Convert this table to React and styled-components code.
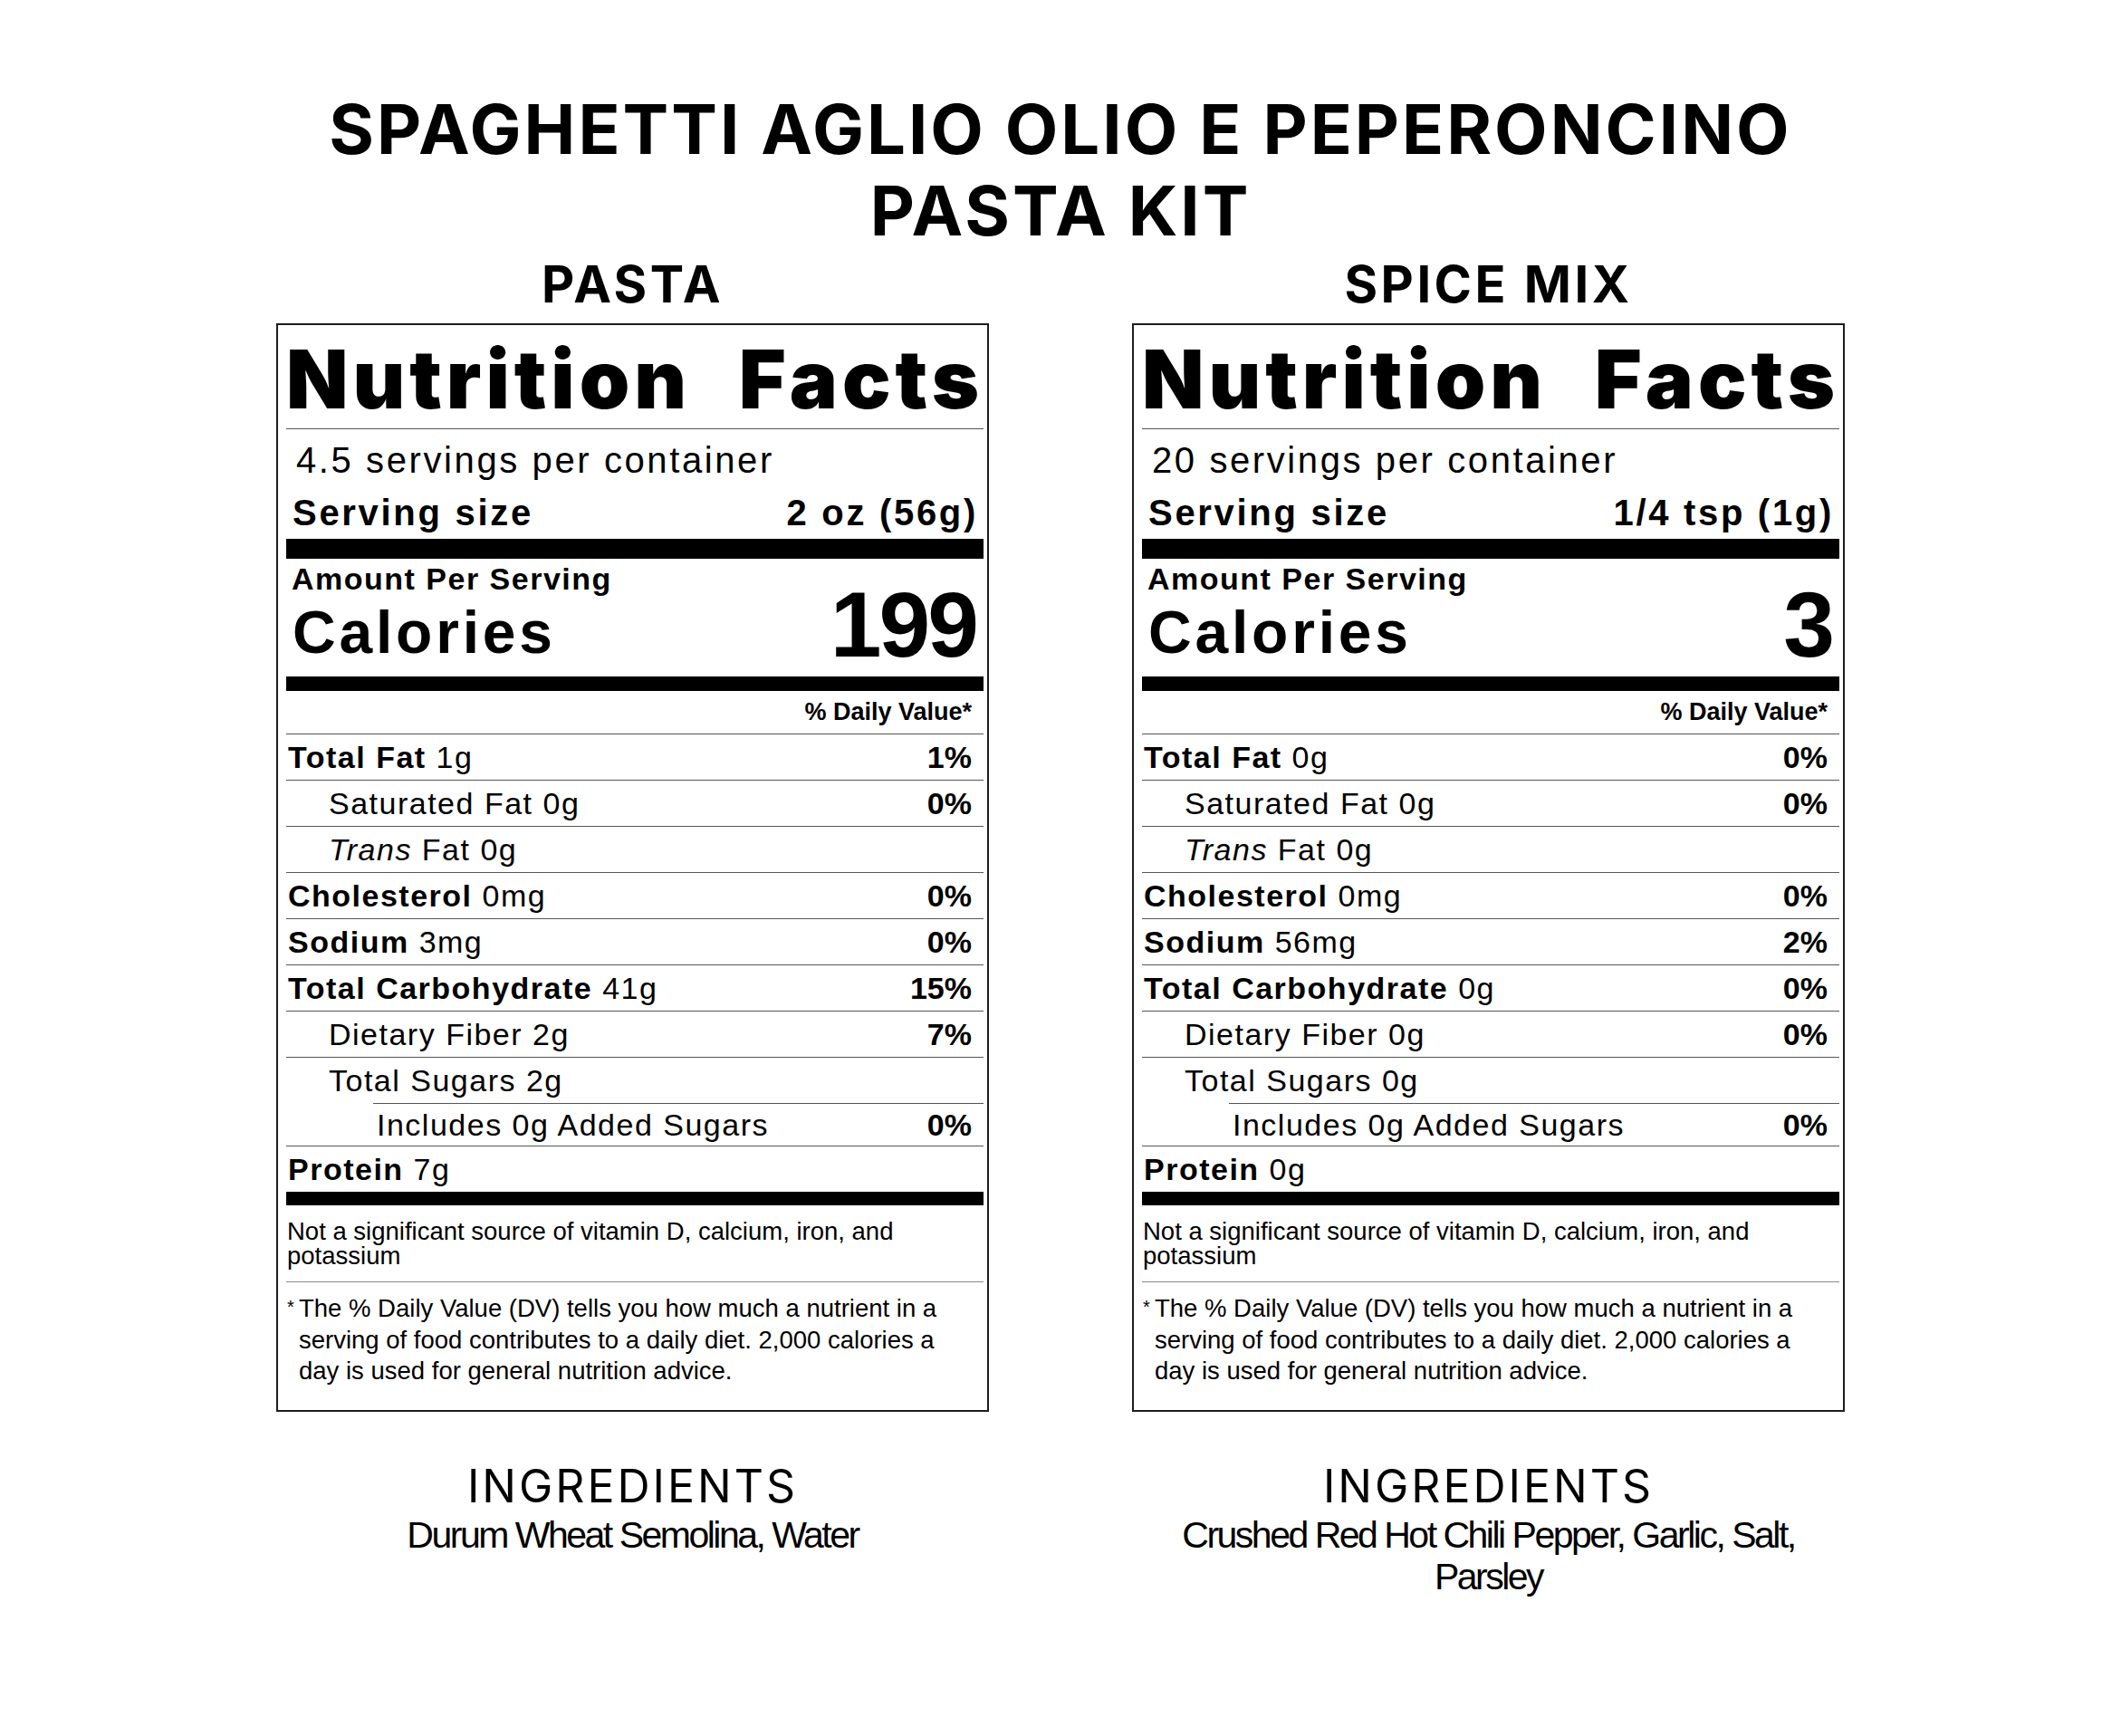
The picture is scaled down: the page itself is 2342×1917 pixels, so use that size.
import React from 'react';
import styled, { createGlobalStyle } from 'styled-components';

const GlobalStyle = createGlobalStyle`
  html, body {
    margin: 0;
    padding: 0;
    background: #ffffff;
  }
  * {
    box-sizing: border-box;
  }
`;

const labelFont = `"Liberation Sans", Arial, Helvetica, sans-serif`;
const displayFont = `Inter, "Open Sans", sans-serif`;

const Page = styled.div`
  width: 2342px;
  min-height: 1917px;
  padding-top: 97px;
  display: flex;
  flex-direction: column;
  align-items: center;
  background: #fff;
  color: #000;
`;

const Title = styled.h1`
  margin: 0;
  font-family: ${displayFont};
  font-weight: 700;
  font-size: 76px;
  line-height: 90px;
  text-align: center;
  letter-spacing: 3px;
`;

const Columns = styled.div`
  display: grid;
  grid-template-columns: 787px 787px;
  column-gap: 158px;
  margin-top: 9px;
`;

const Column = styled.section`
  display: flex;
  flex-direction: column;
  align-items: center;
`;

const SectionTitle = styled.h2`
  margin: 0 0 15px;
  font-family: ${displayFont};
  font-weight: 700;
  font-size: 56px;
  line-height: 56px;
  letter-spacing: 3.5px;
`;

const LabelBox = styled.div`
  width: 787px;
  border: 2px solid #1d1d1d;
  padding: 0 4px 0 9px;
  font-family: ${labelFont};
  color: #000;
`;

const Heading = styled.div`
  display: flex;
  justify-content: space-between;
  height: 115px;
  padding: 4px 0 0 0;
  line-height: 111px;
  font-family: ${displayFont};
  font-weight: 900;
  font-size: 89px;
  letter-spacing: 5px;
  border-bottom: 1px solid #555;
  white-space: nowrap;
`;

const Servings = styled.div`
  height: 68px;
  line-height: 68px;
  padding-left: 11px;
  font-size: 40px;
  letter-spacing: 2.6px;
`;

const ServingSize = styled.div`
  display: flex;
  justify-content: space-between;
  height: 53px;
  line-height: 49px;
  padding: 0 6px 4px 7px;
  font-size: 40px;
  font-weight: 700;
  letter-spacing: 2.7px;
`;

const Bar = styled.div`
  height: ${(p) => p.$h}px;
  background: #000;
`;

const CaloriesBlock = styled.div`
  display: flex;
  justify-content: space-between;
  align-items: flex-start;
  height: 130px;
  padding: 0 8px 0 6px;
`;

const CaloriesLeft = styled.div`
  display: flex;
  flex-direction: column;
  padding-top: 5px;
`;

const AmountLine = styled.div`
  font-size: 34px;
  line-height: 34px;
  font-weight: 700;
  letter-spacing: 1.5px;
`;

const CaloriesWord = styled.div`
  font-size: 66px;
  line-height: 84px;
  font-weight: 700;
  letter-spacing: 3.8px;
  margin-left: 1px;
`;

const CaloriesValue = styled.div`
  margin-top: 22px;
  font-size: 102px;
  line-height: 102px;
  font-weight: 700;
  letter-spacing: -3px;
`;

const DailyHead = styled.div`
  height: 48px;
  line-height: 47px;
  text-align: right;
  padding-right: 13px;
  font-size: 27px;
  font-weight: 700;
  border-bottom: 1px solid #555;
`;

const Row = styled.div`
  display: flex;
  justify-content: space-between;
  align-items: center;
  height: ${(p) => p.$h || 51}px;
  line-height: 50px;
  margin-left: ${(p) => p.$offset || 0}px;
  padding-left: ${(p) => p.$indent}px;
  padding-right: 13px;
  font-size: 34px;
  border-bottom: ${(p) => (p.$line ? '1px solid #555' : '0')};
  border-top: ${(p) => (p.$topLine ? '1px solid #555' : '0')};
`;

const Name = styled.span`
  letter-spacing: 1.5px;
  white-space: nowrap;
`;

const Strong = styled.b`
  font-weight: 700;
`;

const Pct = styled.span`
  font-weight: 700;
`;

const Note = styled.div`
  padding: 15px 0 15px 1px;
  font-size: 27.5px;
  line-height: 27px;
  border-bottom: 1px solid #888;
`;

const Footnote = styled.div`
  display: flex;
  padding: 12px 0 25px 1px;
  font-size: 27.5px;
  line-height: 34.5px;
`;

const Star = styled.span`
  width: 13px;
  flex: none;
  font-size: 20px;
  line-height: 30px;
`;

const Ingredients = styled.div`
  margin-top: 57px;
  display: flex;
  flex-direction: column;
  align-items: center;
  text-align: center;
`;

const IngTitle = styled.div`
  font-family: ${displayFont};
  font-weight: 400;
  font-size: 50px;
  line-height: 50px;
  letter-spacing: 3px;
`;

const IngText = styled.div`
  margin-top: 6px;
  font-family: "Liberation Sans Narrow", "Liberation Sans", Arial, sans-serif;
  font-size: 41px;
  line-height: 46px;
  letter-spacing: -2.5px;
  white-space: nowrap;
`;

const pasta = {
  title: 'PASTA',
  servings: '4.5 servings per container',
  size: '2 oz (56g)',
  calories: '199',
  rows: [
    { name: 'Total Fat', amt: '1g', dv: '1%', bold: true },
    { name: 'Saturated Fat', amt: '0g', dv: '0%', level: 1 },
    { name: 'Fat', italic: 'Trans', amt: '0g', level: 1 },
    { name: 'Cholesterol', amt: '0mg', dv: '0%', bold: true },
    { name: 'Sodium', amt: '3mg', dv: '0%', bold: true },
    { name: 'Total Carbohydrate', amt: '41g', dv: '15%', bold: true },
    { name: 'Dietary Fiber', amt: '2g', dv: '7%', level: 1 },
    { name: 'Total Sugars', amt: '2g', level: 1, noLine: true },
  ],
  added: { amt: '0g', dv: '0%' },
  protein: '7g',
  ingredients: ['Durum Wheat Semolina, Water'],
};

const spice = {
  title: 'SPICE MIX',
  servings: '20 servings per container',
  size: '1/4 tsp (1g)',
  calories: '3',
  rows: [
    { name: 'Total Fat', amt: '0g', dv: '0%', bold: true },
    { name: 'Saturated Fat', amt: '0g', dv: '0%', level: 1 },
    { name: 'Fat', italic: 'Trans', amt: '0g', level: 1 },
    { name: 'Cholesterol', amt: '0mg', dv: '0%', bold: true },
    { name: 'Sodium', amt: '56mg', dv: '2%', bold: true },
    { name: 'Total Carbohydrate', amt: '0g', dv: '0%', bold: true },
    { name: 'Dietary Fiber', amt: '0g', dv: '0%', level: 1 },
    { name: 'Total Sugars', amt: '0g', level: 1, noLine: true },
  ],
  added: { amt: '0g', dv: '0%' },
  protein: '0g',
  ingredients: ['Crushed Red Hot Chili Pepper, Garlic, Salt,', 'Parsley'],
};

const NutrientRow = ({ row }) => (
  <Row $indent={row.level ? 47 : 2} $line={!row.noLine} $h={row.noLine ? 50 : 51}>
    <Name>
      {row.italic && <i>{row.italic} </i>}
      {row.bold ? <Strong>{row.name}</Strong> : row.name} {row.amt}
    </Name>
    {row.dv && <Pct>{row.dv}</Pct>}
  </Row>
);

const NutritionLabel = ({ data }) => (
  <LabelBox>
    <Heading>
      <span>Nutrition</span>
      <span>Facts</span>
    </Heading>
    <Servings>{data.servings}</Servings>
    <ServingSize>
      <span>Serving size</span>
      <span>{data.size}</span>
    </ServingSize>
    <Bar $h={22} />
    <CaloriesBlock>
      <CaloriesLeft>
        <AmountLine>Amount Per Serving</AmountLine>
        <CaloriesWord>Calories</CaloriesWord>
      </CaloriesLeft>
      <CaloriesValue>{data.calories}</CaloriesValue>
    </CaloriesBlock>
    <Bar $h={16} />
    <DailyHead>% Daily Value*</DailyHead>
    {data.rows.map((row) => (
      <NutrientRow key={row.name + (row.italic || '')} row={row} />
    ))}
    <Row $indent={4} $offset={96} $topLine $h={47}>
      <Name>Includes {data.added.amt} Added Sugars</Name>
      <Pct>{data.added.dv}</Pct>
    </Row>
    <Row $indent={2} $topLine>
      <Name>
        <Strong>Protein</Strong> {data.protein}
      </Name>
    </Row>
    <Bar $h={15} />
    <Note>
      Not a significant source of vitamin D, calcium, iron, and
      <br />
      potassium
    </Note>
    <Footnote>
      <Star>*</Star>
      <span>
        The % Daily Value (DV) tells you how much a nutrient in a
        <br />
        serving of food contributes to a daily diet. 2,000 calories a
        <br />
        day is used for general nutrition advice.
      </span>
    </Footnote>
  </LabelBox>
);

const Panel = ({ data }) => (
  <Column>
    <SectionTitle>{data.title}</SectionTitle>
    <NutritionLabel data={data} />
    <Ingredients>
      <IngTitle>INGREDIENTS</IngTitle>
      <IngText>
        {data.ingredients.map((line) => (
          <div key={line}>{line}</div>
        ))}
      </IngText>
    </Ingredients>
  </Column>
);

export default function App() {
  return (
    <>
      <GlobalStyle />
      <Page>
        <Title>
          SPAGHETTI AGLIO OLIO E PEPERONCINO
          <br />
          PASTA KIT
        </Title>
        <Columns>
          <Panel data={pasta} />
          <Panel data={spice} />
        </Columns>
      </Page>
    </>
  );
}
